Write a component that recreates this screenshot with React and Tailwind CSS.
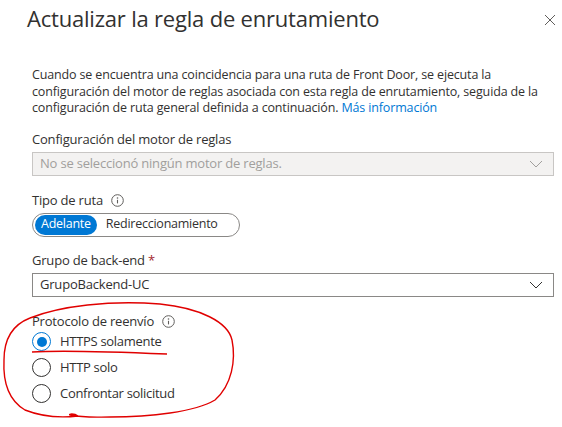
import { useState } from 'react';

const Chevron = ({ muted }) => (
  <svg width="14" height="8" viewBox="0 0 14 8" fill="none">
    <path d="M1 1l6 6 6-6" stroke={muted ? '#a19f9d' : '#323130'} strokeWidth="1" />
  </svg>
);

const InfoIcon = () => (
  <svg width="13" height="13" viewBox="0 0 13 13" fill="none" className="ml-[8px]">
    <circle cx="6.5" cy="6.5" r="5.8" stroke="#605e5c" strokeWidth="1" />
    <circle cx="6.5" cy="4" r="0.8" fill="#605e5c" />
    <path d="M6.5 5.8v3.6" stroke="#605e5c" strokeWidth="1.1" />
  </svg>
);

const Radio = ({ checked, label, onClick }) => (
  <div className="flex items-center h-[20px] cursor-pointer" onClick={onClick}>
    <span
      className={`w-[19px] h-[19px] rounded-full border flex items-center justify-center ${
        checked ? 'border-[#0078d4]' : 'border-[#323130]'
      }`}
    >
      {checked && <span className="w-[10px] h-[10px] rounded-full bg-[#0078d4]" />}
    </span>
    <span className="ml-[9px] text-[13px] tracking-[-0.3px] text-[#323130]">{label}</span>
  </div>
);

export default function App() {
  const [routeType, setRouteType] = useState('forward');
  const [protocol, setProtocol] = useState('https');

  return (
    <div
      className="relative w-[562px] h-[427px] bg-white overflow-hidden text-[#323130]"
      style={{ fontFamily: '"Segoe UI", "Open Sans", sans-serif' }}
    >
      <div className="flex items-start justify-between pt-[4px] pl-[27px] pr-[6px]">
        <h1 className="text-[22px] leading-[28px] font-normal tracking-[-0.2px]">
          Actualizar la regla de enrutamiento
        </h1>
        <svg width="12" height="12" viewBox="0 0 12 12" className="mt-[10px]">
          <path d="M1 1l10 10M11 1L1 11" stroke="#605e5c" strokeWidth="1" />
        </svg>
      </div>

      <div className="pl-[32px] pr-[8px]">
        <p className="mt-[35px] text-[12.5px] leading-[16.5px] tracking-[-0.15px]">
          Cuando se encuentra una coincidencia para una ruta de Front Door, se ejecuta la
          configuración del motor de reglas asociada con esta regla de enrutamiento, seguida de la
          configuración de ruta general definida a continuación.{' '}
          <a className="text-[#0078d4]">Más información</a>
        </p>

        <div className="mt-[14px] text-[13px] leading-[17px] tracking-[-0.2px]">
          Configuración del motor de reglas
        </div>
        <div className="mt-[4px] w-[522px] h-[24px] border border-[#c8c6c4] bg-[#f3f2f1] flex items-center justify-between pl-[7px] pr-[10px]">
          <span className="text-[13px] text-[#a19f9d] tracking-[-0.2px]">
            No se seleccionó ningún motor de reglas.
          </span>
          <Chevron muted />
        </div>

        <div className="mt-[16px] flex items-center text-[13px] leading-[17px] tracking-[-0.2px]">
          Tipo de ruta
          <InfoIcon />
        </div>
        <div className="mt-[4px] inline-flex items-center h-[24px] border border-[#8a8886] rounded-full p-[2px] pr-[12px]">
          <button
            onClick={() => setRouteType('forward')}
            className={`h-[20px] px-[6px] rounded-full text-[12.5px] tracking-[-0.25px] ${
              routeType === 'forward' ? 'bg-[#0078d4] text-white' : 'text-[#323130]'
            }`}
          >
            Adelante
          </button>
          <button
            onClick={() => setRouteType('redirect')}
            className={`h-[20px] px-[9px] rounded-full text-[12.5px] tracking-[-0.25px] ${
              routeType === 'redirect' ? 'bg-[#0078d4] text-white' : 'text-[#323130]'
            }`}
          >
            Redireccionamiento
          </button>
        </div>

        <div className="mt-[15px] text-[13px] leading-[17px] tracking-[-0.2px]">
          Grupo de back-end <span className="text-[#a4262c]">*</span>
        </div>
        <div className="mt-[4px] w-[522px] h-[24px] border border-[#8a8886] bg-white flex items-center justify-between pl-[7px] pr-[10px]">
          <span className="text-[13px] tracking-[-0.2px]">GrupoBackend-UC</span>
          <Chevron />
        </div>

        <div className="mt-[16px] flex items-center text-[13px] leading-[17px] tracking-[-0.2px]">
          Protocolo de reenvío
          <InfoIcon />
        </div>
        <div className="mt-[2px] flex flex-col gap-[6px]">
          <Radio checked={protocol === 'https'} label="HTTPS solamente" onClick={() => setProtocol('https')} />
          <Radio checked={protocol === 'http'} label="HTTP solo" onClick={() => setProtocol('http')} />
          <Radio checked={protocol === 'match'} label="Confrontar solicitud" onClick={() => setProtocol('match')} />
        </div>
      </div>

      {/* red hand-drawn annotation */}
      <svg className="absolute inset-0 pointer-events-none" width="562" height="427" fill="none">
        <path
          d="M30 318 C 60 306, 110 300, 160 304 C 200 308, 228 322, 232 340 C 236 360, 232 385, 215 400 C 195 412, 150 417, 110 417 C 95 417, 85 418, 70 415 C 68 414, 74 413, 78 416 C 60 418, 40 416, 25 410 C 8 400, 3 380, 4 360 C 4 340, 12 325, 30 318"
          stroke="#e00000"
          strokeWidth="1.4"
        />
        <path d="M32 352 C 60 350, 120 352, 167 354" stroke="#e00000" strokeWidth="1.4" />
      </svg>
    </div>
  );
}
